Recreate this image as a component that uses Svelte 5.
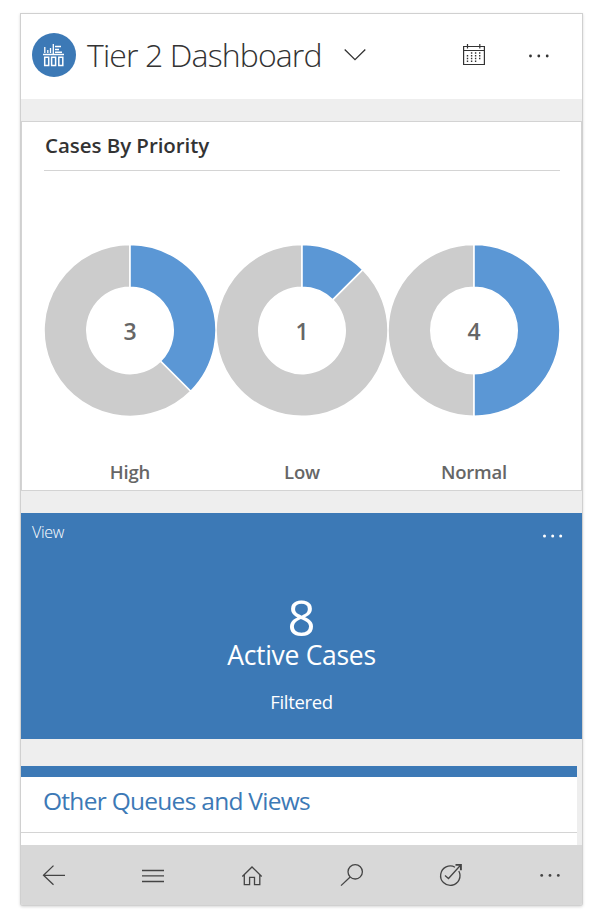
<script>
  const R = 86;
  const r = 43.2;
  const total = 8;
  const priorities = [
    { label: 'High', count: 3 },
    { label: 'Low', count: 1 },
    { label: 'Normal', count: 4 }
  ];

  function slice(from, to) {
    const a = from * 2 * Math.PI;
    const b = to * 2 * Math.PI;
    const large = to - from > 0.5 ? 1 : 0;
    const p = (rad, ang) => `${(rad * Math.sin(ang)).toFixed(2)} ${(-rad * Math.cos(ang)).toFixed(2)}`;
    return `M${p(R, a)}A${R} ${R} 0 ${large} 1 ${p(R, b)}L${p(r, b)}A${r} ${r} 0 ${large} 0 ${p(r, a)}Z`;
  }
</script>

<div class="page">
<div class="window">
  <header>
    <svg class="badge" width="44" height="44" viewBox="0 0 44 44">
      <circle cx="22" cy="22" r="22" fill="#3c79b6" />
      <g fill="none" stroke="#fff">
        <path d="M11 21.5H32" stroke-width="1.4" />
        <path d="M12.8 14V20M15.8 17V20M18.5 15V20M21.3 11V21" stroke-width="1.3" />
        <path d="M23 13.4H29M23 16.4H27M23 19.2H30" stroke-width="1.5" />
        <path d="M12.7 24.2h4v8.3h-4zM19.6 24.2h4v8.3h-4zM26.8 24.2h4v8.3h-4z" stroke-width="1.5" />
      </g>
    </svg>
    <h1>Tier 2 Dashboard</h1>
    <svg class="chevron" width="22" height="14" viewBox="0 0 22 14"><path d="M.7 1.5L11 11.7L21.3 1.5" fill="none" stroke="#333" stroke-width="1.3" /></svg>
    <svg class="calendar" width="22" height="22" viewBox="0 0 22 22" fill="none" stroke="#333">
      <path d="M.6 2.5H21.4V20.5H.6ZM.6 6.5H21.4M4.5 0V4.5M16.8 0V4.5" stroke-width="1.2" />
      <path d="M4.5 11V18.5M8.6 8.2V18.5M12.6 8.2V18.5M16.7 8.2V16" stroke-width="1.4" stroke-dasharray="1.5 1.3" />
    </svg>
    <svg class="more" width="22" height="4" viewBox="0 0 22 4" fill="#333"><circle cx="2.5" cy="2" r="1.4" /><circle cx="10.8" cy="2" r="1.4" /><circle cx="19.2" cy="2" r="1.4" /></svg>
  </header>

  <section class="card">
    <h2>Cases By Priority</h2>
    <div class="charts">
      {#each priorities as p}
        <figure>
          <div class="ring">
            <svg width="172" height="172" viewBox="-86 -86.4 172 172" stroke="#fff" stroke-width="1.6">
              <path d={slice(p.count / total, 1)} fill="#ccc" />
              <path d={slice(0, p.count / total)} fill="#5b97d5" />
            </svg>
            <b>{p.count}</b>
          </div>
          <figcaption>{p.label}</figcaption>
        </figure>
      {/each}
    </div>
  </section>

  <section class="tile">
    <div class="tile-top">
      <span class="view">View</span>
      <svg width="22" height="4" viewBox="0 0 22 4" fill="#fff"><circle cx="2.5" cy="2" r="1.5" /><circle cx="10.7" cy="2" r="1.5" /><circle cx="18.7" cy="2" r="1.5" /></svg>
    </div>
    <div class="number">8</div>
    <div class="name">Active Cases</div>
    <div class="filter">Filtered</div>
  </section>

  <section class="list">
    <h3>Other Queues and Views</h3>
  </section>

  <nav>
    <svg width="24" height="24" viewBox="0 0 24 24"><path d="M23 12.3H1.5M11.5 2.6L1.5 12.3L11.5 21.8" /></svg>
    <svg width="24" height="24" viewBox="0 0 24 24"><path d="M1 7.5H23M1 12.8H23M1 18.5H23" /></svg>
    <svg width="24" height="24" viewBox="0 0 24 24"><path d="M2.3 13.5L12 4L21.7 13.5M4.3 12V21.6H9.6V14.3H14.5V21.6H19.8V12" /></svg>
    <svg width="24" height="24" viewBox="0 0 24 24"><circle cx="15.2" cy="8.8" r="7.2" /><path d="M10.2 14L1 22.6" /></svg>
    <svg width="24" height="24" viewBox="0 0 24 24"><path d="M16 4.2A9.7 9.7 0 1 0 19.8 8M6 12.5L9.5 15.5L21.5 2.3" /><path d="M16.5 1.9H21.9V7.3" stroke-width="1.9" /></svg>
    <svg class="dots" width="24" height="24" viewBox="0 0 24 24"><circle cx="3.7" cy="12.4" r="1.4" /><circle cx="12" cy="12.4" r="1.4" /><circle cx="20.3" cy="12.4" r="1.4" /></svg>
  </nav>
</div>
</div>

<style>
  :global(body) { background: #fff; }
  .page {
    box-sizing: border-box;
    height: 924px;
    padding: 14px 20px 19px 21px;
    background: #fff;
  }
  .window {
    box-sizing: border-box;
    width: 561px;
    height: 891px;
    background: #eee;
    border-radius: 0 0 2px 2px;
    box-shadow: 0 0 0 1px #d0d0d0, 0 1px 3px 1px rgba(0, 0, 0, .16);
    font-family: "Open Sans", "Noto Sans", sans-serif;
    display: flex;
    flex-direction: column;
    overflow: hidden;
  }
  h1, h2, h3, figure { margin: 0; font-weight: normal; }
  svg { display: block; flex: none; }
  header {
    height: 85px;
    flex: none;
    display: flex;
    align-items: center;
    background: #fff;
    padding: 0 32px 3px 11px;
    box-sizing: border-box;
  }
  h1 {
    width: 235px;
    margin-left: 11px;
    font-size: 32px;
    line-height: 44px;
    font-weight: 300;
    letter-spacing: -.87px;
    white-space: nowrap;
    color: #333;
  }
  .chevron { margin-left: 22px; }
  .calendar { margin-left: auto; margin-top: -1px; }
  .more { margin-left: 43px; margin-top: 1px; }
  .card {
    box-sizing: border-box;
    height: 370px;
    flex: none;
    margin-top: 22px;
    padding: 0 21px 0 22px;
    border: 1px solid #d3d3d3;
    background: #fff;
  }
  h2 {
    height: 48px;
    border-bottom: 1px solid #d4d4d4;
    padding-left: 1px;
    font-size: 20.5px;
    line-height: 46px;
    font-weight: 600;
    letter-spacing: -.05px;
    color: #333;
    white-space: nowrap;
  }
  .charts { display: flex; margin-top: 73px; }
  figure { width: 172px; flex: none; display: flex; flex-direction: column; align-items: center; }
  .ring { display: grid; place-items: center; }
  .ring svg, .ring b { grid-area: 1 / 1; }
  b { font-size: 23px; font-weight: 600; color: #666; line-height: 28px; padding-top: 2px; }
  figcaption { margin-top: 43px; font-size: 18.5px; line-height: 26px; font-weight: 600; letter-spacing: -.2px; color: #666; }
  .tile {
    height: 226px;
    flex: none;
    margin-top: 22px;
    background: #3c79b6;
    color: #fff;
    text-align: center;
  }
  .tile-top { display: flex; justify-content: space-between; align-items: center; height: 46px; padding: 0 18px 0 11px; }
  .view { font-size: 16px; font-weight: 300; line-height: 20px; margin-top: -8px; letter-spacing: -.3px; }
  .number { font-size: 49px; line-height: 48px; margin-top: 34px; }
  .name { font-size: 26.5px; line-height: 30px; margin-top: -1px; letter-spacing: -.3px; }
  .filter { font-size: 18.5px; line-height: 26px; margin-top: 19px; letter-spacing: -.35px; }
  .list {
    width: 556px;
    height: 79px;
    flex: none;
    box-sizing: border-box;
    margin-top: 27px;
    border-top: 11px solid #3c79b6;
    background: #fff;
  }
  h3 {
    height: 55px;
    padding-left: 22px;
    border-bottom: 1px solid #d4d4d4;
    font-size: 24.5px;
    line-height: 48px;
    letter-spacing: -.72px;
    color: #3c79b6;
    white-space: nowrap;
  }
  nav {
    flex: 1;
    display: flex;
    align-items: center;
    justify-content: space-between;
    padding: 0 20px 0 21px;
    background: #d8d8d8;
  }
  nav svg { fill: none; stroke: #444; stroke-width: 1.3; }
  nav .dots { fill: #444; stroke: none; }
</style>
